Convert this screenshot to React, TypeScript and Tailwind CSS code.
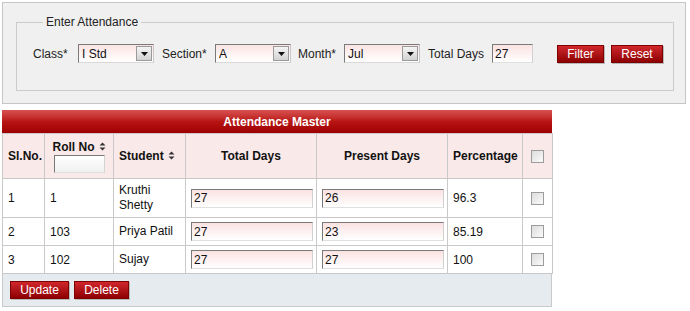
import React from 'react';

const font = "font-['Liberation_Sans',Arial,sans-serif]";

const SortIcon: React.FC = () => (
  <svg width="7" height="9" viewBox="0 0 7 9" className="inline-block ml-[4px] align-[0px]">
    <path d="M3.5 0.5 L6.5 3.5 L0.5 3.5 Z" fill="#333" />
    <path d="M3.5 8.5 L6.5 5.5 L0.5 5.5 Z" fill="#333" />
  </svg>
);

const Select: React.FC<{ value: string }> = ({ value }) => (
  <div className="relative flex h-[19px] w-[76px] items-center border border-t-[#7a7a7a] border-l-[#7a7a7a] border-r-[#c8c8c8] border-b-[#d8d8d8] bg-gradient-to-b from-[#fbe4e4] to-white">
    <span className="pl-[3px] text-[12px] text-[#111]">{value}</span>
    <div className="absolute right-[1px] top-[1px] bottom-[1px] flex w-[16px] items-center justify-center border border-[#9a9a9a] bg-gradient-to-b from-[#f4f4f4] to-[#d2d2d2]">
      <svg width="7" height="4" viewBox="0 0 7 4">
        <path d="M0 0 L7 0 L3.5 4 Z" fill="#111" />
      </svg>
    </div>
  </div>
);

const TextBox: React.FC<{ value: string; w: string }> = ({ value, w }) => (
  <div className={`flex h-[19px] ${w} items-center border border-t-[#7a7a7a] border-l-[#7a7a7a] border-r-[#d0d0d0] border-b-[#e0e0e0] bg-gradient-to-b from-[#fbe2e2] to-white pl-[2px] text-[12px] text-[#111]`}>
    {value}
  </div>
);

const RedButton: React.FC<{ label: string; w: string }> = ({ label, w }) => (
  <button className={`h-[18px] ${w} border border-[#7d0000] bg-gradient-to-b from-[#d0262b] to-[#8e0000] text-[12px] leading-none text-white shadow-[1px_1px_0_#b9b9b9]`}>
    {label}
  </button>
);

const Check: React.FC = () => (
  <div className="mx-auto h-[13px] w-[13px] border border-[#9c9c9c] bg-gradient-to-br from-[#dcdcdc] to-[#fbfbfb]" />
);

const rows = [
  { sl: '1', roll: '1', student: 'Kruthi Shetty', total: '27', present: '26', pct: '96.3', tall: true },
  { sl: '2', roll: '103', student: 'Priya Patil', total: '27', present: '23', pct: '85.19', tall: false },
  { sl: '3', roll: '102', student: 'Sujay', total: '27', present: '27', pct: '100', tall: false },
];

const cell = 'border border-[#c9c9c9] px-[5px] text-[12px] text-[#111]';

export default function App() {
  return (
    <div className={`${font} min-h-[311px] bg-white p-[2px] text-[12px] text-[#222]`}>
      <div className="w-[684px] border border-[#c6c6c6] bg-[#f0f0f0] pl-[13px] pr-[11px] pt-[10px] pb-[12px]">
        <fieldset className="border border-[#cbcbcb] pl-[16px] pr-[10px] pt-[13px] pb-[27px]">
          <legend className="ml-[10px] px-[3px] text-[12px] text-[#222]">Enter Attendance</legend>
          <div className="flex items-center">
            <span className="w-[45px] shrink-0">Class*</span>
            <Select value="I Std" />
            <span className="ml-[8px] w-[53px] shrink-0">Section*</span>
            <Select value="A" />
            <span className="ml-[7px] w-[46px] shrink-0">Month*</span>
            <Select value="Jul" />
            <span className="ml-[8px] w-[64px] shrink-0">Total Days</span>
            <TextBox value="27" w="w-[41px]" />
            <div className="ml-[24px] flex gap-[7px]">
              <RedButton label="Filter" w="w-[47px]" />
              <RedButton label="Reset" w="w-[52px]" />
            </div>
          </div>
        </fieldset>
      </div>

      <div className="mt-[6px] w-[550px]">
        <div className="flex h-[23px] items-center justify-center bg-gradient-to-b from-[#d95050] via-[#b81414] to-[#9e0000] text-[12px] font-bold text-white">
          Attendance Master
        </div>
        <table className="w-full table-fixed border-collapse">
          <colgroup>
            <col className="w-[42px]" />
            <col className="w-[69px]" />
            <col className="w-[72px]" />
            <col className="w-[131px]" />
            <col className="w-[131px]" />
            <col className="w-[75px]" />
            <col className="w-[30px]" />
          </colgroup>
          <thead>
            <tr className="h-[45px] bg-[#f9e9e9] font-bold">
              <th className={`${cell} text-center font-bold`}>Sl.No.</th>
              <th className={`${cell} py-0 text-center font-bold`}>
                <div className="flex flex-col items-center">
                  <span className="leading-[14px]">
                    Roll No
                    <SortIcon />
                  </span>
                  <div className="mt-[1px] h-[18px] w-[51px] border border-t-[#7a7a7a] border-l-[#7a7a7a] border-r-[#d4d4d4] border-b-[#e0e0e0] bg-gradient-to-b from-white to-[#f0f0f0]" />
                </div>
              </th>
              <th className={`${cell} text-left font-bold`}>
                Student
                <SortIcon />
              </th>
              <th className={`${cell} text-center font-bold`}>Total Days</th>
              <th className={`${cell} text-center font-bold`}>Present Days</th>
              <th className={`${cell} text-center font-bold`}>Percentage</th>
              <th className={`${cell} px-0`}>
                <Check />
              </th>
            </tr>
          </thead>
          <tbody>
            {rows.map((r) => (
              <tr key={r.sl} className={r.tall ? 'h-[39px]' : 'h-[28px]'}>
                <td className={cell}>{r.sl}</td>
                <td className={cell}>{r.roll}</td>
                <td className={`${cell} leading-[15px]`}>{r.student}</td>
                <td className={`${cell} px-[3px]`}>
                  <TextBox value={r.total} w="w-[122px]" />
                </td>
                <td className={`${cell} px-[3px]`}>
                  <TextBox value={r.present} w="w-[122px]" />
                </td>
                <td className={cell}>{r.pct}</td>
                <td className={`${cell} px-0`}>
                  <Check />
                </td>
              </tr>
            ))}
          </tbody>
        </table>
        <div className="flex gap-[5px] border-x border-b border-[#c9c9c9] bg-[#e6ebef] pl-[7px] pt-[7px] pb-[7px]">
          <RedButton label="Update" w="w-[59px]" />
          <RedButton label="Delete" w="w-[55px]" />
        </div>
      </div>
    </div>
  );
}
